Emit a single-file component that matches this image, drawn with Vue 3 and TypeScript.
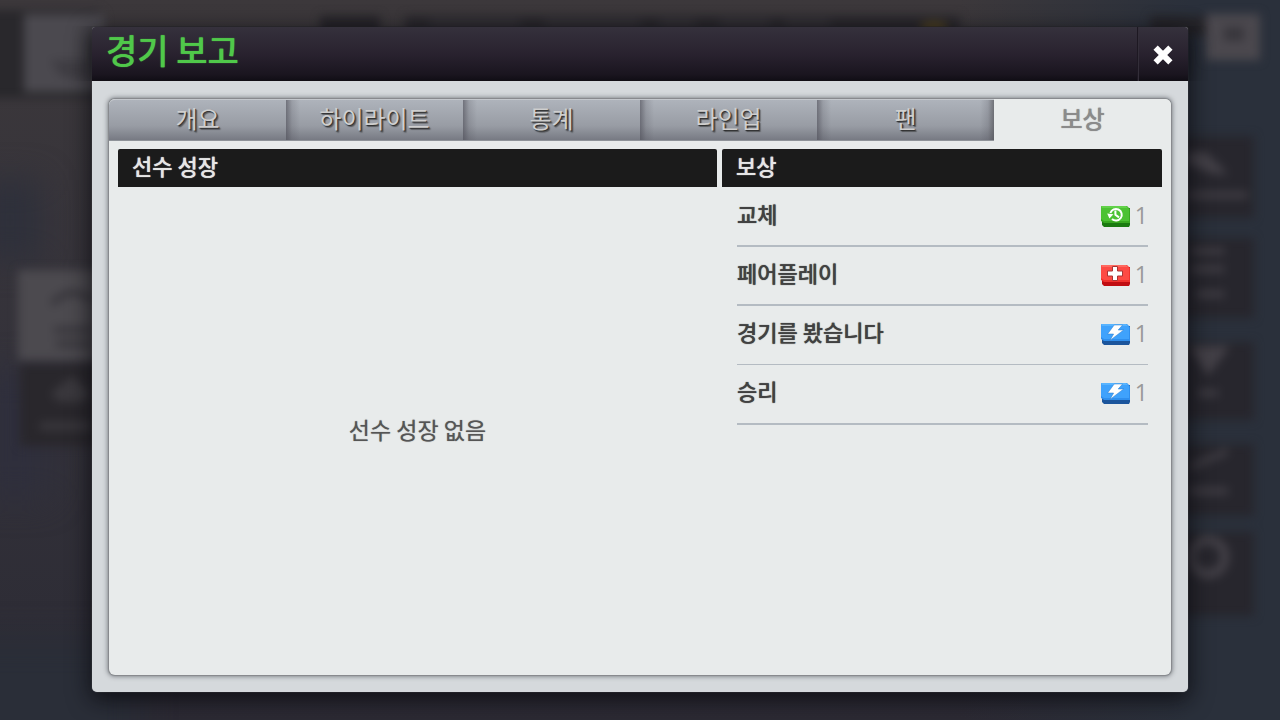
<script setup lang="ts">
import { ref } from 'vue'

type IconKind = 'sub' | 'medic' | 'energy'
interface Reward { label: string; icon: IconKind; amount: number }

const tabs: string[] = ['개요', '하이라이트', '통계', '라인업', '팬', '보상']
const active = ref<number>(5)

const rewards: Reward[] = [
  { label: '교체', icon: 'sub', amount: 1 },
  { label: '페어플레이', icon: 'medic', amount: 1 },
  { label: '경기를 봤습니다', icon: 'energy', amount: 1 },
  { label: '승리', icon: 'energy', amount: 1 },
]
const palette: Record<IconKind, { top: string; face: string; low: string; edge: string }> = {
  sub: { top: '#62d24a', face: '#4cc233', low: '#38a820', edge: '#1a7a10' },
  medic: { top: '#ff6a60', face: '#fd4a44', low: '#f0322e', edge: '#c00d12' },
  energy: { top: '#58b4ff', face: '#3fa2fc', low: '#2f8fee', edge: '#1b559c' },
}
</script>

<template>
  <div class="screen">
    <svg class="scene" viewBox="0 0 1280 720" preserveAspectRatio="none" aria-hidden="true">
      <defs>
        <linearGradient id="sky" x1="0" y1="0" x2="0" y2="1">
          <stop offset="0" stop-color="#3c383b" />
          <stop offset="0.5" stop-color="#34323a" />
          <stop offset="0.85" stop-color="#2e2d36" />
          <stop offset="1" stop-color="#2c2a34" />
        </linearGradient>
        <linearGradient id="side" x1="0" y1="0" x2="1" y2="0">
          <stop offset="0.75" stop-color="#2a303b" stop-opacity="0" />
          <stop offset="0.93" stop-color="#2a303b" />
        </linearGradient>
        <filter id="soft" x="-20%" y="-20%" width="140%" height="140%" color-interpolation-filters="sRGB">
          <feGaussianBlur stdDeviation="5" />
        </filter>
        <filter id="haze" x="-60%" y="-60%" width="220%" height="220%" color-interpolation-filters="sRGB">
          <feGaussianBlur stdDeviation="16" />
        </filter>
      </defs>
      <rect width="1280" height="720" fill="url(#sky)" />
      <rect width="1280" height="720" fill="url(#side)" />
      <g filter="url(#haze)">
        <rect x="-20" y="180" width="60" height="80" fill="#2e303b" />
        <rect x="-20" y="370" width="70" height="130" fill="#2f2f3c" />
        <rect x="-40" y="640" width="180" height="120" fill="#2a2e38" />
      </g>
      <g filter="url(#soft)">
        <rect x="-20" y="10" width="120" height="88" fill="#29282c" />
        <rect x="24" y="14" width="80" height="78" fill="#4b494f" />
        <path d="M50 60 L90 60 L90 82 L60 76Z" fill="#3f3d43" />
        <rect x="18" y="270" width="90" height="90" fill="#4c4a4f" />
        <path d="M52 304 Q70 284 92 300 M54 330 H92 M56 344 H92" stroke="#38363c" stroke-width="7" fill="none" />
        <rect x="20" y="364" width="90" height="82" fill="#29272c" />
        <path d="M50 394 L72 376 L92 394 L82 402 H60Z M40 422 H92 V430 H40Z" fill="#3a383d" />
        <rect x="320" y="16" width="60" height="20" fill="#262429" />
        <rect x="405" y="16" width="555" height="20" fill="#29272c" />
        <path d="M430 23 H520 M545 23 H640 M660 23 H695 M720 23 H770 M785 23 H830" stroke="#39373c" stroke-width="5" />
        <ellipse cx="934" cy="27" rx="14" ry="5" fill="#55461f" />
        <rect x="1150" y="16" width="60" height="20" fill="#252429" />
        <rect x="1206" y="14" width="54" height="46" fill="#4b484e" />
        <rect x="1224" y="27" width="20" height="14" fill="#38363c" />
        <rect x="1170" y="136" width="84" height="82" fill="#27262d" />
        <rect x="1170" y="238" width="84" height="80" fill="#27262d" />
        <rect x="1170" y="342" width="84" height="78" fill="#27262d" />
        <rect x="1170" y="444" width="84" height="72" fill="#27262d" />
        <rect x="1170" y="532" width="84" height="84" fill="#27262d" />
        <path d="M1186 152 H1206 L1228 174 H1214 L1186 164Z M1186 192 H1248 V198 H1186Z M1190 248 H1224 V254 H1190Z M1190 266 H1224 V272 H1190Z M1196 291 H1224 V297 H1196Z M1188 346 H1230 L1208 376Z M1198 390 H1218 V396 H1198Z M1190 464 L1228 448 V454 L1190 470Z M1188 488 H1228 V494 H1188Z" fill="#434047" />
        <circle cx="1208" cy="557" r="17" fill="none" stroke="#434047" stroke-width="9" />
      </g>
    </svg>

    <section class="dialog" aria-labelledby="dialog-title">
      <header class="bar">
        <h1 id="dialog-title">경기 보고</h1>
        <button class="close" type="button" aria-label="닫기">
          <svg width="22" height="22" viewBox="0 0 22 22" aria-hidden="true">
            <path d="M3.6 3.6 L18.4 18.4 M18.4 3.6 L3.6 18.4" stroke="#fff" stroke-width="6" />
          </svg>
        </button>
      </header>

      <div class="frame">
        <div class="sheet">
          <nav class="tabs" role="tablist">
            <button
              v-for="(tab, i) in tabs"
              :key="tab"
              type="button"
              role="tab"
              class="tab"
              :class="{ on: i === active, first: i === 0, before: i === active - 1 }"
              :aria-selected="i === active"
              @click="active = i"
            >{{ tab }}</button>
          </nav>

          <div class="columns">
            <section class="column">
              <h2>선수 성장</h2>
              <p class="empty">선수 성장 없음</p>
            </section>
            <section class="column">
              <h2>보상</h2>
              <ul class="rewards">
                <li v-for="item in rewards" :key="item.label">
                  <span class="label">{{ item.label }}</span>
                  <svg class="chip" width="30" height="22" viewBox="0 0 30 22" aria-hidden="true">
                    <path d="M1 3 H29 V20 L28 22 H3 L1 20Z" :fill="palette[item.icon].edge" />
                    <path d="M0 1 H26 L29 4 V18 H3 L0 16Z" :fill="palette[item.icon].low" />
                    <path d="M0 1 H25 L28 4 V16 H3 L0 14Z" :fill="palette[item.icon].face" />
                    <path d="M0 1 H25 L27 3 H1Z" :fill="palette[item.icon].top" />
                    <g v-if="item.icon === 'sub'" fill="none" stroke="#fff" stroke-width="2">
                      <path d="M9.4 8 A5.8 5.8 0 1 1 11 14" />
                      <path d="M14.4 5.6 V9.8 L18 12.4" />
                      <path d="M6.2 8.6 L12.4 9.2 L8.4 13.4Z" fill="#fff" stroke="none" />
                    </g>
                    <path
                      v-else-if="item.icon === 'medic'"
                      d="M11.5 2.5 H16.5 V7 H21.5 V12 H16.5 V16.5 H11.5 V12 H6.5 V7 H11.5Z"
                      fill="#fff" stroke="#a83434" stroke-width="1"
                    />
                    <path
                      v-else
                      d="M13.2 2 H21.6 L17.2 7 H22.6 L9 17.4 L12.6 11 H6.6Z"
                      fill="#fff" stroke="#2979c8" stroke-width="0.5"
                    />
                  </svg>
                  <span class="amount">{{ item.amount }}</span>
                </li>
              </ul>
            </section>
          </div>
        </div>
      </div>
    </section>
  </div>
</template>

<style>
body {
  margin: 0;
  background: #2f2e36;
}
</style>

<style scoped>
.screen {
  position: relative;
  box-sizing: border-box;
  min-height: 100vh;
  padding: 27px 92px 28px;
  display: flex;
  overflow: hidden;
  font-family: "Noto Sans CJK KR", "Noto Sans", sans-serif;
}
.scene {
  position: absolute;
  inset: 0;
  width: 100%;
  height: 100%;
}
.dialog {
  position: relative;
  flex: 1;
  display: flex;
  flex-direction: column;
  min-width: 0;
  border-radius: 3px 3px 5px 5px;
  background: #d5d9dc;
  box-shadow: 0 0 1px #8a8d92, 0 6px 22px 2px rgba(8, 8, 12, 0.75);
}
.bar {
  display: flex;
  align-items: stretch;
  height: 54px;
  border-radius: 3px 3px 0 0;
  background: linear-gradient(#35313c, #29222f 50%, #1a151f 88%, #100d14);
  box-shadow: 0 0 1px #131116, 0 0 20px rgba(8, 8, 12, 0.5);
  clip-path: inset(-1px -20px 0);
}
h1 {
  flex: 1;
  margin: 0;
  padding-left: 14px;
  font-size: 34px;
  line-height: 46px;
  font-weight: 500;
  color: #50c84a;
  text-shadow: 0 0 1px #50c84a;
}
.close {
  width: 51px;
  padding: 2px 0 0;
  border: 0;
  border-left: 1px solid #1d1822;
  box-shadow: inset 1px 0 #332e39;
  background: none;
  display: flex;
  align-items: center;
  justify-content: center;
}
.frame {
  flex: 1;
  display: flex;
  padding: 18px 17px 17px;
}
.sheet {
  flex: 1;
  display: flex;
  flex-direction: column;
  min-width: 0;
  border-radius: 6px;
  background: #e8ebeb;
  box-shadow: 0 0 1px 1px #85888c, 0 0 4px 2px rgba(70, 74, 80, 0.5);
}
.tabs {
  display: grid;
  grid-template-columns: repeat(6, 1fr);
}
.tab {
  height: 42px;
  padding: 0 0 4px;
  border: 0;
  border-top: 1px solid #c4c8cd;
  border-bottom: 1px solid #8f9399;
  background:
    linear-gradient(90deg, rgba(80, 80, 90, 0.65), rgba(80, 80, 90, 0.2) 6px, rgba(80, 80, 90, 0) 14px),
    linear-gradient(#aeb3bb, #989ca4 65%, #777a83);
  font: inherit;
  font-size: 24px;
  line-height: 34px;
  color: #cfcfcf;
  text-shadow: 1px 1px 1px #2b2b2b, 2px 2px 1px rgba(40, 40, 40, 0.5);
}
.tab.first {
  border-top-left-radius: 6px;
  background: linear-gradient(#aeb3bb, #989ca4 65%, #777a83);
}
.tab.before {
  background:
    linear-gradient(90deg, rgba(80, 80, 90, 0.65), rgba(80, 80, 90, 0.2) 6px, rgba(80, 80, 90, 0) 14px),
    linear-gradient(270deg, rgba(80, 80, 85, 0.65), rgba(80, 80, 90, 0.2) 6px, rgba(80, 80, 90, 0) 14px),
    linear-gradient(#aeb3bb, #989ca4 65%, #777a83);
}
.tab.on {
  border-color: transparent;
  border-top-right-radius: 6px;
  background: #e8ebeb;
  color: #8b8b8b;
  font-weight: 500;
  text-shadow: 0 0 1px #8b8b8b;
}
.columns {
  flex: 1;
  display: grid;
  grid-template-columns: 599fr 440fr;
  gap: 5px;
  padding: 8px 9px 0;
}
.column {
  display: flex;
  flex-direction: column;
  min-width: 0;
}
h2 {
  margin: 0;
  height: 38px;
  padding: 0 14px;
  border-radius: 2px 2px 0 0;
  background: #1b1b1b;
  color: #e6e6e6;
  text-shadow: 0 0 1px #e6e6e6;
  font-size: 22px;
  line-height: 32px;
  font-weight: 500;
}
.empty {
  flex: 1;
  display: flex;
  align-items: center;
  justify-content: center;
  margin: 0;
  padding-bottom: 4px;
  font-size: 23px;
  line-height: 34px;
  color: #555;
  text-shadow: 0 0 1px #777;
}
.rewards {
  list-style: none;
  margin: 0;
  padding: 1px 14px 0 15px;
}
.rewards li {
  box-sizing: border-box;
  height: 59px;
  padding-bottom: 2px;
  display: flex;
  align-items: center;
  border-bottom: 2px solid #b4bbc2;
}
.rewards li:nth-child(3) {
  border-bottom-width: 1px;
}
.rewards li:last-child {
  height: 60px;
}
.label {
  flex: 1;
  padding-bottom: 6px;
  font-size: 22px;
  line-height: 32px;
  font-weight: 500;
  color: #414141;
  text-shadow: 0 0 1px #414141;
}
.amount {
  width: 17px;
  padding-bottom: 2px;
  text-align: right;
  font-family: "Open Sans", "Noto Sans", sans-serif;
  font-size: 23px;
  line-height: 32px;
  color: #999;
}
</style>
